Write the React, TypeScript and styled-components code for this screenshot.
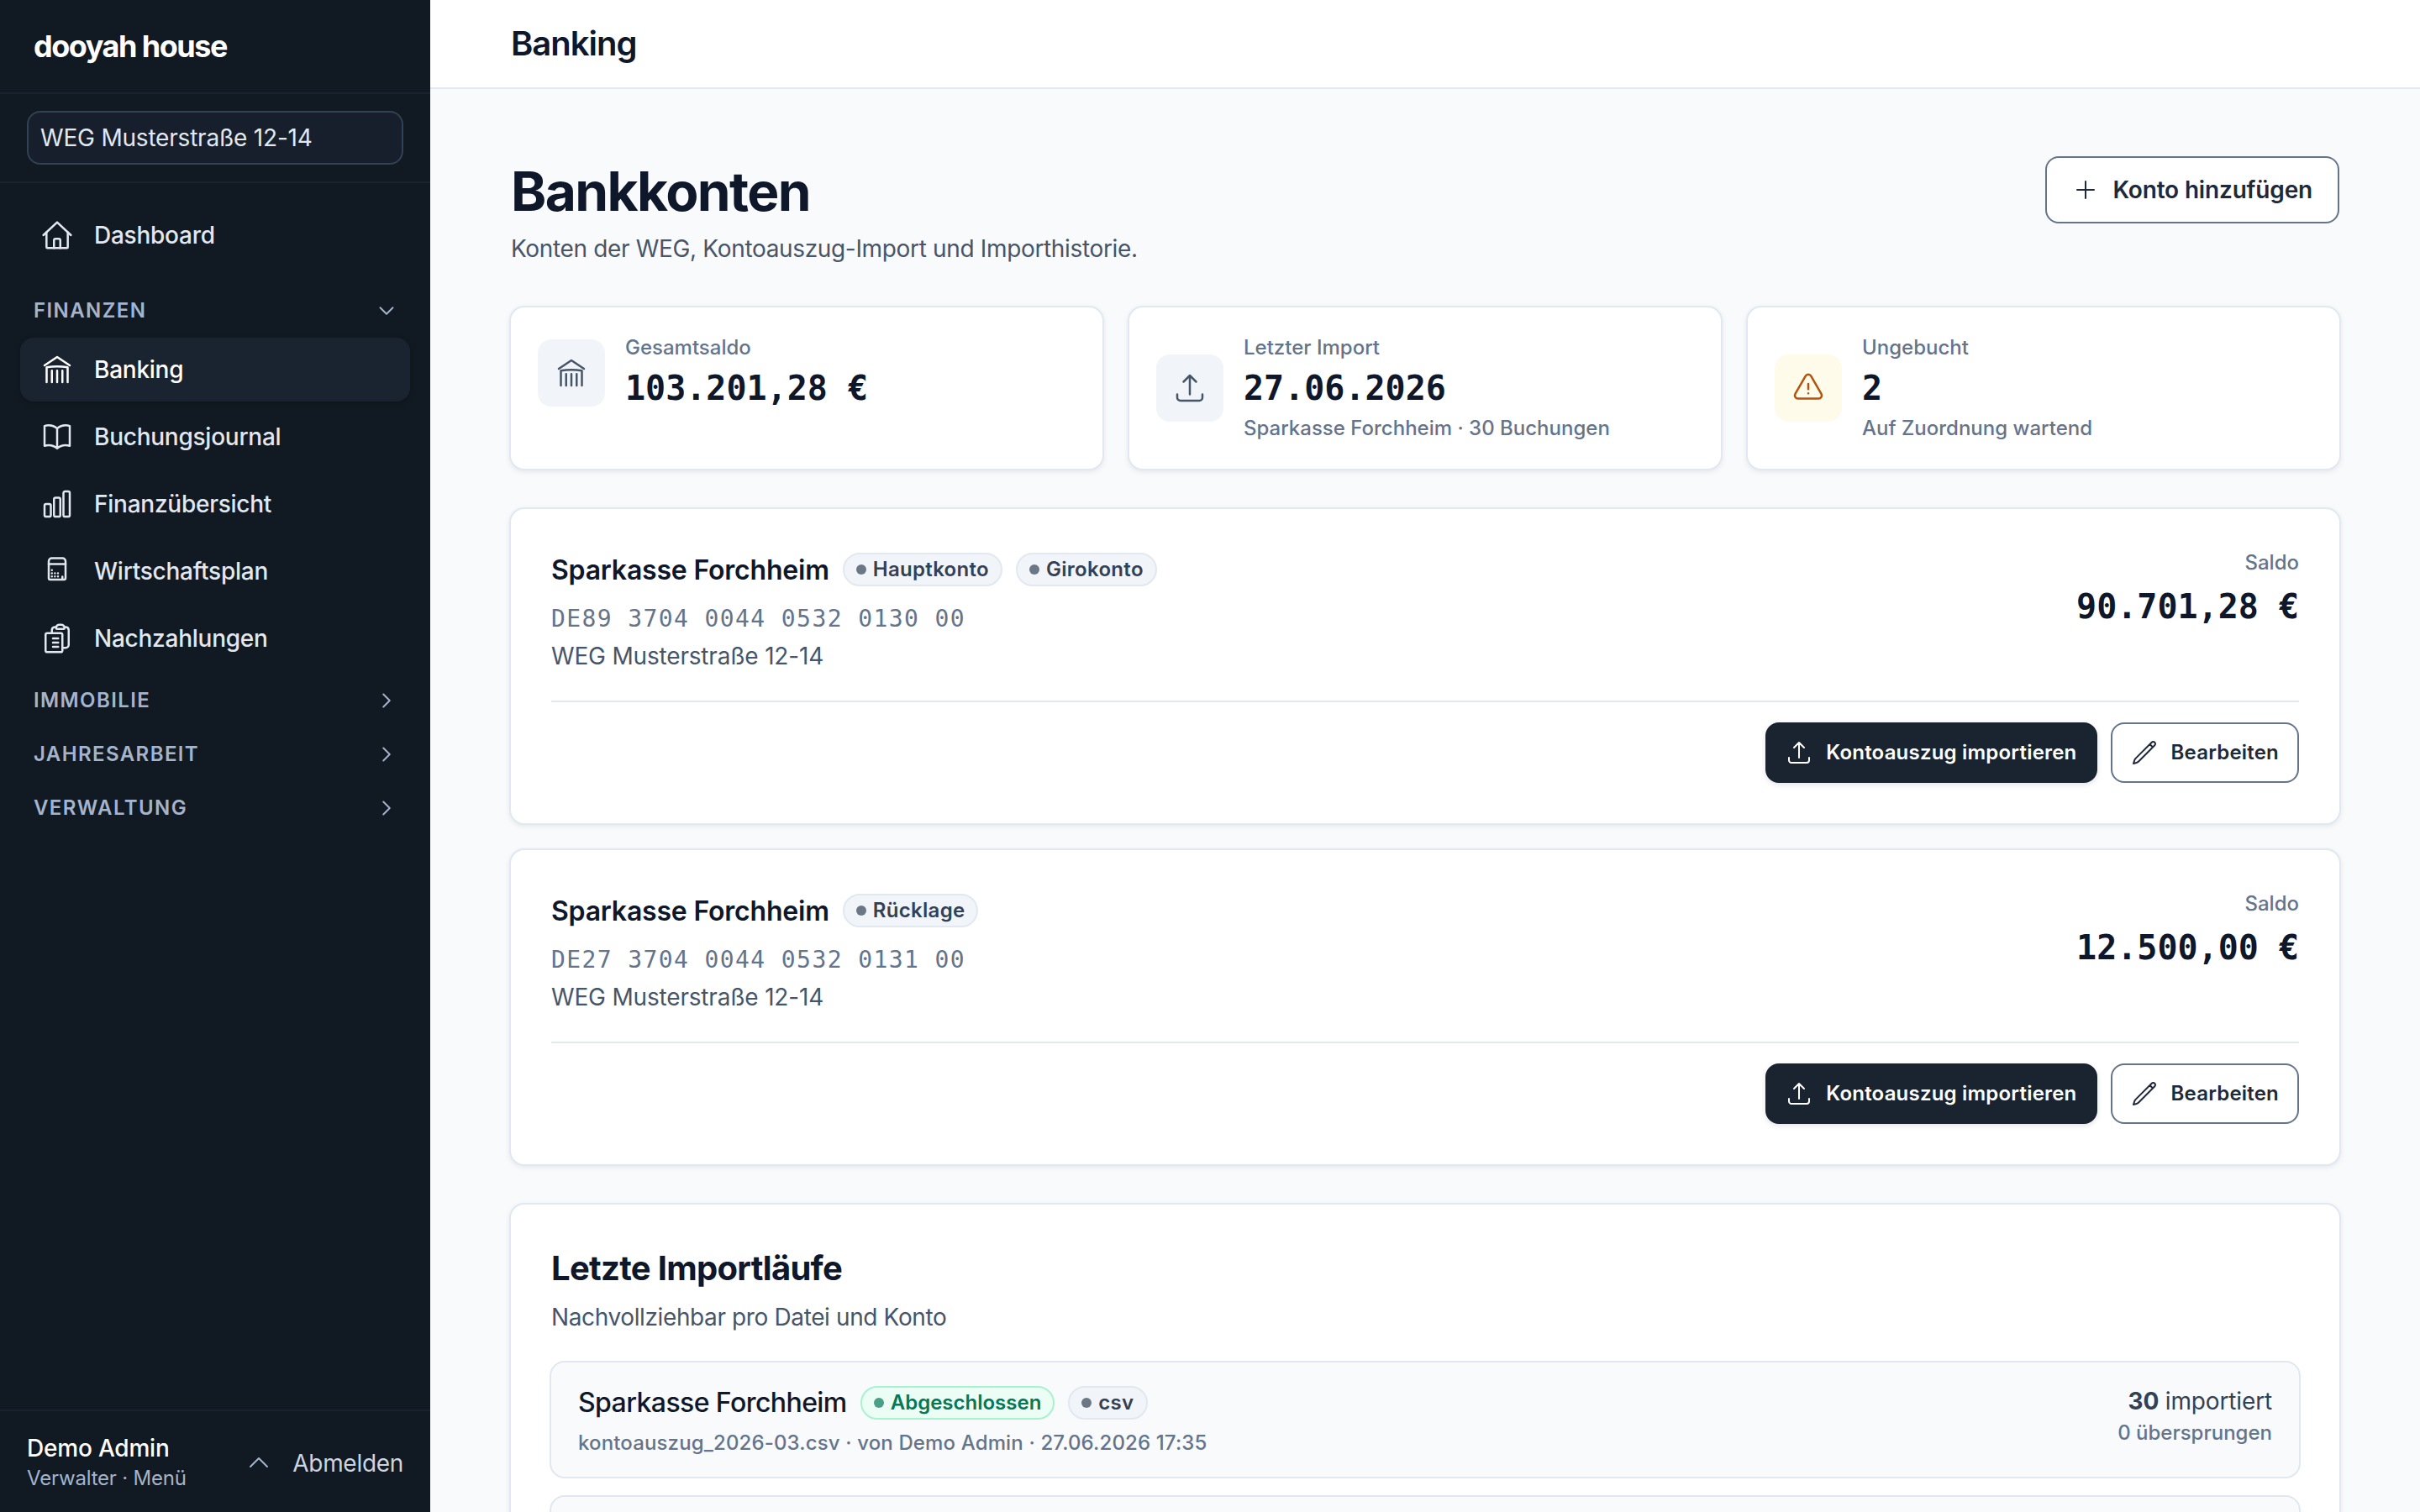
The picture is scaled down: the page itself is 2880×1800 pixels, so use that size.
import React from 'react';
import styled, { createGlobalStyle, css } from 'styled-components';

const sans = `Inter, 'Liberation Sans', sans-serif`;
const mono = `'DejaVu Sans Mono', 'Liberation Mono', monospace`;

const color = {
  ink: '#0f172a',
  slate800: '#1e293b',
  slate700: '#334155',
  slate600: '#475569',
  slate500: '#64748b',
  slate200: '#e2e8f0',
  slate100: '#f1f5f9',
  slate50: '#f8fafc',
  side: '#111922',
  sideActive: '#1a2330',
  sideMuted: '#a3b4cc',
};

const GlobalStyle = createGlobalStyle`
  *, *::before, *::after {
    box-sizing: border-box;
  }
  body {
    margin: 0;
    font-family: ${sans};
    font-size: 28px;
    line-height: 40px;
    color: ${color.ink};
    background: ${color.slate50};
    -webkit-font-smoothing: antialiased;
  }
  h1, h2, h3, p {
    margin: 0;
  }
  button {
    font: inherit;
    color: inherit;
    margin: 0;
  }
`;

const iconPaths = {
  home: [
    'M2.15 12 12 2.8 21.85 12',
    'M4.4 9.9v10.7c0 .33.27.6.6.6h14c.33 0 .6-.27.6-.6V9.9',
    'M9.75 21.2v-5.5c0-.6.5-1.1 1.1-1.1h2.3c.6 0 1.1.5 1.1 1.1v5.5',
  ],
  bank: [
    'M12 21v-8.25M15.75 21v-8.25M8.25 21v-8.25',
    'M3 9l9-6 9 6',
    'M19.5 21V10.332A48.36 48.36 0 0 0 12 9.75c-2.551 0-5.056.2-7.5.582V21',
  ],
  book: [
    'M12 6.042A8.967 8.967 0 0 0 6 3.75c-1.052 0-2.062.18-3 .512v14.25A8.987 8.987 0 0 1 6 18c2.305 0 4.408.867 6 2.292m0-14.25a8.966 8.966 0 0 1 6-2.292c1.052 0 2.062.18 3 .512v14.25A8.987 8.987 0 0 0 18 18a8.967 8.967 0 0 0-6 2.292m0-14.25v14.25',
  ],
  chart: [
    'M3 13.125C3 12.504 3.504 12 4.125 12h2.25c.621 0 1.125.504 1.125 1.125v6.75C7.5 20.496 6.996 21 6.375 21h-2.25A1.125 1.125 0 0 1 3 19.875v-6.75ZM9.75 8.625c0-.621.504-1.125 1.125-1.125h2.25c.621 0 1.125.504 1.125 1.125v11.25c0 .621-.504 1.125-1.125 1.125h-2.25a1.125 1.125 0 0 1-1.125-1.125V8.625ZM16.5 4.125c0-.621.504-1.125 1.125-1.125h2.25C20.496 3 21 3.504 21 4.125v15.75c0 .621-.504 1.125-1.125 1.125h-2.25a1.125 1.125 0 0 1-1.125-1.125V4.125Z',
  ],
  calculator: [
    'M6 4.9a2.15 2.15 0 0 1 2.15-2.15h7.7A2.15 2.15 0 0 1 18 4.9v12.1c0 .55-.45 1-1 1H7c-.55 0-1-.45-1-1V4.9Z',
    'M6 6.9h12',
    'M8.25 11.3h.008v.008H8.25zM8.25 13.5h.008v.008H8.25zM8.25 15.7h.008v.008H8.25zM10.4 13.5h.008v.008H10.4zM10.4 15.7h.008v.008H10.4zM12.6 13.5h.008v.008h-.008zM12.6 15.7h.008v.008h-.008zM15.75 15.9v1.6',
  ],
  clipboard: [
    'M9 12h3.75M9 15h3.75M9 18h3.75m3 .75H18a2.25 2.25 0 0 0 2.25-2.25V6.108c0-1.135-.845-2.098-1.976-2.192a48.424 48.424 0 0 0-1.123-.08m-5.801 0c-.065.21-.1.433-.1.664 0 .414.336.75.75.75h4.5a.75.75 0 0 0 .75-.75 2.25 2.25 0 0 0-.1-.664m-5.8 0A2.251 2.251 0 0 1 13.5 2.25H15c1.012 0 1.867.668 2.15 1.586m-5.8 0c-.376.023-.75.05-1.124.08C9.095 4.01 8.25 4.973 8.25 6.108V8.25m0 0H4.875c-.621 0-1.125.504-1.125 1.125v11.25c0 .621.504 1.125 1.125 1.125h9.75c.621 0 1.125-.504 1.125-1.125V9.375c0-.621-.504-1.125-1.125-1.125H8.25Z',
  ],
  upload: [
    'M3 16.5v2.25A2.25 2.25 0 0 0 5.25 21h13.5A2.25 2.25 0 0 0 21 18.75V16.5m-13.5-9L12 3m0 0 4.5 4.5M12 3v13.5',
  ],
  warning: [
    'M12 9v3.75m-9.303 3.376c-.866 1.5.217 3.374 1.948 3.374h14.71c1.73 0 2.813-1.874 1.948-3.374L13.949 3.378c-.866-1.5-3.032-1.5-3.898 0L2.697 16.126ZM12 15.75h.007v.008H12v-.008Z',
  ],
  pencil: [
    'm16.862 4.487 1.687-1.688a1.875 1.875 0 1 1 2.652 2.652L6.832 19.82a4.5 4.5 0 0 1-1.897 1.13l-2.685.8.8-2.685a4.5 4.5 0 0 1 1.13-1.897L16.863 4.487Zm0 0L19.5 7.125',
  ],
  plus: ['M12 4.5v15m7.5-7.5h-15'],
  chevronDown: ['m19.5 8.25-7.5 7.5-7.5-7.5'],
  chevronRight: ['m8.25 4.5 7.5 7.5-7.5 7.5'],
  chevronUp: ['m4.5 15.75 7.5-7.5 7.5 7.5'],
};

type IconName = keyof typeof iconPaths;

const Svg = styled.svg<{ $size: number }>`
  display: block;
  flex: none;
  width: ${(props) => props.$size}px;
  height: ${(props) => props.$size}px;
  fill: none;
  stroke: currentColor;
  stroke-linecap: round;
  stroke-linejoin: round;
`;

const Icon = ({
  name,
  size = 40,
  stroke = 1.5,
}: {
  name: IconName;
  size?: number;
  stroke?: number;
}) => (
  <Svg $size={size} viewBox="0 0 24 24" strokeWidth={stroke} aria-hidden="true">
    {iconPaths[name].map((d) => (
      <path key={d} d={d} />
    ))}
  </Svg>
);

const Layout = styled.div`
  display: flex;
  height: 1800px;
  overflow: hidden;
`;

const Sidebar = styled.aside`
  display: flex;
  flex-direction: column;
  flex: none;
  width: 512px;
  background: ${color.side};
  letter-spacing: -0.2px;
`;

const Brand = styled.div`
  height: 112px;
  padding: 31px 40px 0;
  border-bottom: 2px solid ${color.sideActive};
  color: #fff;
  font-size: 36px;
  line-height: 48px;
  font-weight: 700;
  letter-spacing: -1.5px;
`;

const PropertyBox = styled.div`
  height: 106px;
  padding: 20px 32px;
  border-bottom: 2px solid ${color.sideActive};
`;

const PropertySelect = styled.div`
  display: flex;
  align-items: center;
  height: 64px;
  padding: 0 14px;
  border: 2px solid ${color.slate700};
  border-radius: 16px;
  background: #181f2c;
  color: ${color.slate200};
`;

const Nav = styled.nav`
  display: flex;
  flex-direction: column;
  flex: 1;
  padding: 24px 24px 0;
`;

const NavItem = styled.a<{ $active?: boolean }>`
  display: flex;
  align-items: center;
  gap: 24px;
  height: 76px;
  padding: 0 24px;
  border-radius: 16px;
  font-weight: 500;
  letter-spacing: -0.25px;
  color: ${color.slate200};
  ${(props) =>
    props.$active &&
    css`
      color: #fff;
      background: ${color.sideActive};
      box-shadow: 0 2px 6px rgba(0, 0, 0, 0.18);
    `}
`;

const NavList = styled.div`
  display: flex;
  flex-direction: column;
  gap: 4px;
  margin-bottom: 4px;
`;

const NavGroup = styled.div<{ $first?: boolean }>`
  display: flex;
  align-items: center;
  justify-content: space-between;
  height: 64px;
  padding: 0 16px;
  margin-top: ${(props) => (props.$first ? 20 : 0)}px;
  color: ${color.sideMuted};
  font-size: 24px;
  line-height: 32px;
  font-weight: 600;
  letter-spacing: 1.4px;
  text-transform: uppercase;
`;

const UserBar = styled.div`
  display: flex;
  align-items: center;
  height: 122px;
  padding: 0 32px;
  border-top: 2px solid ${color.sideActive};
`;

const User = styled.div`
  flex: 1;
  color: ${color.sideMuted};
  font-size: 24px;
  line-height: 32px;
  strong {
    display: block;
    color: #fff;
    font-size: 28px;
    line-height: 40px;
    font-weight: 500;
  }
`;

const UserToggle = styled.span`
  margin-right: 24px;
  padding-top: 2px;
  color: ${color.sideMuted};
`;

const Logout = styled.span`
  padding-top: 3px;
  color: #cbd5e1;
  letter-spacing: -0.3px;
`;

const Main = styled.main`
  flex: 1;
  min-width: 0;
`;

const TopBar = styled.header`
  height: 106px;
  padding: 24px 96px 0;
  border-bottom: 2px solid ${color.slate200};
  background: #fff;
  font-size: 40px;
  line-height: 56px;
  font-weight: 600;
  letter-spacing: -1px;
`;

const Content = styled.div`
  padding: 80px 94px 0 94px;
`;

const PageHead = styled.div`
  display: flex;
  justify-content: space-between;
  align-items: flex-start;
  padding: 0 2px;
  height: 178px;
`;

const PageTitle = styled.h1`
  padding-top: 4px;
  font-size: 64px;
  line-height: 76px;
  font-weight: 700;
  letter-spacing: -1.6px;
`;

const Lead = styled.p`
  margin-top: 10px;
  color: ${color.slate600};
  letter-spacing: -0.34px;
`;

const Button = styled.button<{ $solid?: boolean; $large?: boolean }>`
  display: flex;
  align-items: center;
  gap: 16px;
  height: ${(props) => (props.$large ? 80 : 72)}px;
  padding: 0 ${(props) => (props.$large ? 30 : 22)}px;
  border: 2px solid ${color.slate500};
  border-radius: 16px;
  background: #fff;
  color: ${color.slate800};
  font-size: ${(props) => (props.$large ? 28 : 24)}px;
  font-weight: 600;
  letter-spacing: ${(props) => (props.$large ? -0.17 : 0.2)}px;
  ${(props) =>
    props.$solid &&
    css`
      border-color: ${color.sideActive};
      background: ${color.sideActive};
      color: #fff;
      box-shadow: 0 2px 6px rgba(15, 23, 42, 0.12);
    `}
`;

const cardStyle = css`
  border: 2px solid ${color.slate200};
  border-radius: 18px;
  background: #fff;
  box-shadow: 0 2px 6px rgba(15, 23, 42, 0.08);
`;

const Stats = styled.div`
  display: grid;
  grid-template-columns: repeat(3, 1fr);
  gap: 28px;
`;

const StatCard = styled.section`
  ${cardStyle}
  display: flex;
  align-items: flex-start;
  height: 196px;
  padding: 32px 32px 0;
`;

const StatBody = styled.div`
  display: flex;
  align-items: center;
  gap: 24px;
`;

const StatIcon = styled.div<{ $warn?: boolean }>`
  display: grid;
  place-items: center;
  width: 80px;
  height: 80px;
  border-radius: 16px;
  background: ${(props) => (props.$warn ? '#fffbeb' : color.slate100)};
  color: ${(props) => (props.$warn ? '#b45309' : color.slate600)};
`;

const Meta = styled.p`
  color: ${color.slate500};
  font-size: 24px;
  line-height: 32px;
  font-weight: 500;
`;

const Amount = styled.p`
  font-family: ${mono};
  font-size: 40px;
  line-height: 56px;
  font-weight: 700;
  white-space: pre;
`;

const StatValue = styled(Amount)`
  margin-top: 4px;
`;

const StatHint = styled(Meta)`
  margin-top: 4px;
`;

const Accounts = styled.div`
  display: flex;
  flex-direction: column;
  gap: 28px;
  margin-top: 44px;
`;

const AccountCard = styled.section`
  ${cardStyle}
  height: 378px;
  padding: 46px 48px 0;
`;

const AccountTop = styled.div`
  display: flex;
  justify-content: space-between;
  height: 184px;
  border-bottom: 2px solid ${color.slate200};
`;

const TitleRow = styled.div`
  display: flex;
  align-items: center;
  gap: 16px;
`;

const AccountName = styled.h3`
  padding-top: 2px;
  font-size: 32px;
  line-height: 50px;
  font-weight: 600;
  letter-spacing: -0.2px;
`;

const Iban = styled.p`
  margin-top: 11px;
  color: ${color.slate500};
  font-family: ${mono};
  letter-spacing: 1.4px;
  line-height: 44px;
`;

const Owner = styled.p`
  color: ${color.slate600};
  line-height: 44px;
  letter-spacing: -0.18px;
`;

const Balance = styled.div`
  padding-top: 2px;
  text-align: right;
  ${Amount} {
    margin-top: 8px;
  }
`;

const Actions = styled.div`
  display: flex;
  justify-content: flex-end;
  gap: 16px;
  padding-top: 24px;
`;

const Badge = styled.span<{ $ok?: boolean }>`
  display: inline-flex;
  align-items: center;
  gap: 8px;
  height: 40px;
  padding: 0 14px;
  border: 2px solid ${(props) => (props.$ok ? '#a7f3d0' : color.slate200)};
  border-radius: 20px;
  background: ${(props) => (props.$ok ? '#ecfdf5' : color.slate100)};
  color: ${(props) => (props.$ok ? '#047857' : color.slate700)};
  font-size: 24px;
  line-height: 32px;
  font-weight: 600;
  letter-spacing: ${(props) => (props.$ok ? 0 : 0.3)}px;
  &::before {
    content: '';
    width: 12px;
    height: 12px;
    border-radius: 50%;
    background: currentColor;
    opacity: 0.7;
  }
`;

const ImportPanel = styled.section`
  ${cardStyle}
  height: 700px;
  margin-top: 44px;
  padding: 48px 46px 0;
`;

const PanelTitle = styled.h2`
  padding-left: 2px;
  font-size: 40px;
  line-height: 56px;
  font-weight: 700;
  letter-spacing: -0.7px;
`;

const PanelLead = styled.p`
  margin: 10px 0 32px;
  padding-left: 2px;
  color: ${color.slate600};
  letter-spacing: -0.38px;
`;

const ImportRow = styled.div`
  display: flex;
  justify-content: space-between;
  height: 140px;
  margin-bottom: 20px;
  padding: 28px 32px 0;
  border: 2px solid ${color.slate200};
  border-radius: 18px;
  background: ${color.slate50};
`;

const ImportName = styled.h3`
  font-size: 32px;
  line-height: 40px;
  font-weight: 500;
  letter-spacing: -0.58px;
`;

const ImportMeta = styled(Meta)`
  margin-top: 12px;
  letter-spacing: 0.14px;
`;

const ImportCount = styled.div`
  color: ${color.slate700};
  text-align: right;
  line-height: 36px;
  letter-spacing: -0.15px;
  ${Meta} {
    margin-top: 4px;
    letter-spacing: 0;
  }
`;

const navItems: { icon: IconName; label: string }[] = [
  { icon: 'bank', label: 'Banking' },
  { icon: 'book', label: 'Buchungsjournal' },
  { icon: 'chart', label: 'Finanzübersicht' },
  { icon: 'calculator', label: 'Wirtschaftsplan' },
  { icon: 'clipboard', label: 'Nachzahlungen' },
];

const stats: {
  icon: IconName;
  label: string;
  value: string;
  hint?: string;
  warn?: boolean;
}[] = [
  { icon: 'bank', label: 'Gesamtsaldo', value: '103.201,28 €' },
  {
    icon: 'upload',
    label: 'Letzter Import',
    value: '27.06.2026',
    hint: 'Sparkasse Forchheim · 30 Buchungen',
  },
  {
    icon: 'warning',
    label: 'Ungebucht',
    value: '2',
    hint: 'Auf Zuordnung wartend',
    warn: true,
  },
];

const accounts = [
  {
    iban: 'DE89 3704 0044 0532 0130 00',
    tags: ['Hauptkonto', 'Girokonto'],
    saldo: '90.701,28 €',
  },
  {
    iban: 'DE27 3704 0044 0532 0131 00',
    tags: ['Rücklage'],
    saldo: '12.500,00 €',
  },
];

const App = () => {
  return (
    <>
      <GlobalStyle />
      <Layout>
        <Sidebar>
          <Brand>dooyah house</Brand>
          <PropertyBox>
            <PropertySelect>WEG Musterstraße 12-14</PropertySelect>
          </PropertyBox>
          <Nav>
            <NavItem>
              <Icon name="home" />
              Dashboard
            </NavItem>
            <NavGroup $first>
              Finanzen
              <Icon name="chevronDown" size={24} stroke={2} />
            </NavGroup>
            <NavList>
              {navItems.map((item) => (
                <NavItem key={item.label} $active={item.label === 'Banking'}>
                  <Icon name={item.icon} />
                  {item.label}
                </NavItem>
              ))}
            </NavList>
            {['Immobilie', 'Jahresarbeit', 'Verwaltung'].map((group) => (
              <NavGroup key={group}>
                {group}
                <Icon name="chevronRight" size={24} stroke={2} />
              </NavGroup>
            ))}
          </Nav>
          <UserBar>
            <User>
              <strong>Demo Admin</strong>
              Verwalter · Menü
            </User>
            <UserToggle>
              <Icon name="chevronUp" size={32} />
            </UserToggle>
            <Logout>Abmelden</Logout>
          </UserBar>
        </Sidebar>
        <Main>
          <TopBar>Banking</TopBar>
          <Content>
            <PageHead>
              <div>
                <PageTitle>Bankkonten</PageTitle>
                <Lead>Konten der WEG, Kontoauszug-Import und Importhistorie.</Lead>
              </div>
              <Button $large>
                <Icon name="plus" size={32} />
                Konto hinzufügen
              </Button>
            </PageHead>
            <Stats>
              {stats.map((stat) => (
                <StatCard key={stat.label}>
                  <StatBody>
                    <StatIcon $warn={stat.warn}>
                      <Icon name={stat.icon} />
                    </StatIcon>
                    <div>
                      <Meta>{stat.label}</Meta>
                      <StatValue>{stat.value}</StatValue>
                      {stat.hint && <StatHint>{stat.hint}</StatHint>}
                    </div>
                  </StatBody>
                </StatCard>
              ))}
            </Stats>
            <Accounts>
              {accounts.map((account) => (
                <AccountCard key={account.iban}>
                  <AccountTop>
                    <div>
                      <TitleRow>
                        <AccountName>Sparkasse Forchheim</AccountName>
                        {account.tags.map((tag) => (
                          <Badge key={tag}>{tag}</Badge>
                        ))}
                      </TitleRow>
                      <Iban>{account.iban}</Iban>
                      <Owner>WEG Musterstraße 12-14</Owner>
                    </div>
                    <Balance>
                      <Meta>Saldo</Meta>
                      <Amount>{account.saldo}</Amount>
                    </Balance>
                  </AccountTop>
                  <Actions>
                    <Button $solid>
                      <Icon name="upload" size={32} />
                      Kontoauszug importieren
                    </Button>
                    <Button>
                      <Icon name="pencil" size={32} />
                      Bearbeiten
                    </Button>
                  </Actions>
                </AccountCard>
              ))}
            </Accounts>
            <ImportPanel>
              <PanelTitle>Letzte Importläufe</PanelTitle>
              <PanelLead>Nachvollziehbar pro Datei und Konto</PanelLead>
              <ImportRow>
                <div>
                  <TitleRow>
                    <ImportName>Sparkasse Forchheim</ImportName>
                    <Badge $ok>Abgeschlossen</Badge>
                    <Badge>csv</Badge>
                  </TitleRow>
                  <ImportMeta>
                    kontoauszug_2026-03.csv · von Demo Admin · 27.06.2026 17:35
                  </ImportMeta>
                </div>
                <ImportCount>
                  <b>30</b> importiert
                  <Meta>0 übersprungen</Meta>
                </ImportCount>
              </ImportRow>
              <ImportRow />
            </ImportPanel>
          </Content>
        </Main>
      </Layout>
    </>
  );
};

export default App;
